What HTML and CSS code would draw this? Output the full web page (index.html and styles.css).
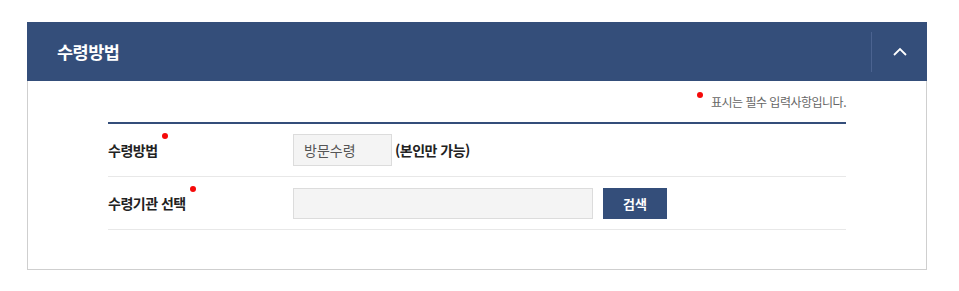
FILE: index.html
```html
<!DOCTYPE html>
<html lang="ko">
<head>
<meta charset="utf-8">
<link rel="stylesheet" href="styles.css">
</head>
<body>
<section class="panel">
  <header class="panel-head">
    <h2 class="panel-title">수령방법</h2>
    <button class="toggle" type="button" aria-label="접기">
      <svg width="14" height="9" viewBox="0 0 14 9"><path d="M1 8 L7 2 L13 8" fill="none" stroke="#fff" stroke-width="1.8"/></svg>
    </button>
  </header>
  <div class="panel-body">
    <p class="note"><span class="dot"></span>표시는 필수 입력사항입니다.</p>
    <div class="form-table">
      <div class="row">
        <div class="label"><span class="req">수령방법</span></div>
        <div class="field">
          <div class="input short">방문수령</div>
          <span class="desc">(본인만 가능)</span>
        </div>
      </div>
      <div class="row">
        <div class="label"><span class="req">수령기관 선택</span></div>
        <div class="field">
          <div class="input long"></div>
          <button class="btn" type="button">검색</button>
        </div>
      </div>
    </div>
  </div>
</section>
</body>
</html>
```
FILE: styles.css
```css
* { box-sizing: border-box; }
body {
  margin: 0;
  padding: 22px 32px 0 27px;
  font-family: "Noto Sans CJK KR", "Noto Sans", sans-serif;
  background: #fff;
  color: #222;
}
.panel { width: 900px; }
.panel-head {
  height: 59px;
  background: #344e7a;
  display: flex;
  align-items: center;
  justify-content: space-between;
}
.panel-title {
  margin: 0 0 0 30px;
  color: #fff;
  font-size: 17.5px;
  font-weight: 700;
  letter-spacing: -0.5px;
}
.toggle {
  width: 56px;
  height: 40px;
  border: 0;
  border-left: 1px solid #4b6390;
  background: transparent;
  display: flex;
  align-items: center;
  justify-content: center;
  padding: 0;
}
.panel-body {
  border: 1px solid #cfcfcf;
  border-top: 0;
  height: 189px;
  padding: 0 80px 0 80px;
}
.note {
  margin: 0;
  height: 41px;
  display: flex;
  justify-content: flex-end;
  align-items: center;
  font-size: 12px;
  color: #666;
  letter-spacing: -0.5px;
}
.dot, .req::after {
  display: inline-block;
  width: 6px;
  height: 6px;
  border-radius: 50%;
  background: #f50a0a;
}
.dot { margin-right: 8px; position: relative; top: -7px; }
.form-table { border-top: 2px solid #344e7a; }
.row {
  display: flex;
  align-items: center;
  border-bottom: 1px solid #e8e8e8;
  height: 53px;
}
.label {
  width: 185px;
  font-size: 14px;
  font-weight: 700;
  letter-spacing: -0.5px;
  color: #222;
}
.req { position: relative; }
.req::after {
  content: "";
  position: absolute;
  right: -10px;
  top: -7px;
}
.field { display: flex; align-items: center; }
.input {
  height: 32px;
  background: #f4f4f4;
  border: 1px solid #dcdcdc;
  font-size: 14px;
  color: #555;
  display: flex;
  align-items: center;
  padding-left: 10px;
}
.short { width: 99px; }
.long { width: 300px; height: 31px; }
.desc {
  margin-left: 3px;
  font-size: 14px;
  font-weight: 700;
  letter-spacing: -0.5px;
  color: #222;
}
.btn {
  margin-left: 10px;
  width: 64px;
  height: 31px;
  border: 0;
  background: #344e7a;
  color: #fff;
  font-family: inherit;
  font-size: 13px;
  font-weight: 700;
  padding: 0;
}
```
